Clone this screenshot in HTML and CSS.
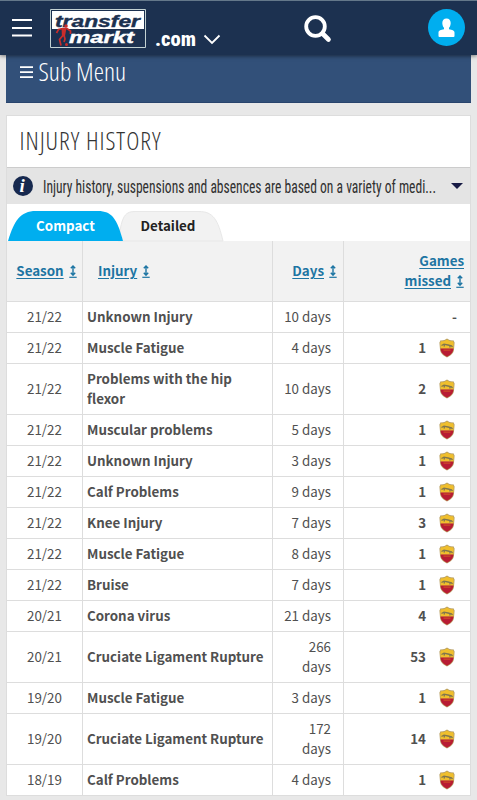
FILE: index.html
```
<!DOCTYPE html>
<html lang="en">
<head>
	<meta charset="UTF-8">
	<title>Injury history</title>
	<link rel="stylesheet" href="styles.css">
</head>
<body>
	<svg class="defs" width="0" height="0">
		<symbol id="crest" viewBox="0 0 16 20">
			<path d="M8 .5C6.200 2 3.500 2.600 1.600 2.300L.4 4.500 1 11.500c.4 4 3.300 6 7 8 3.700-2 6.600-4 7-8l.6-7-1.200-2.200C12.500 2.600 9.800 2 8 .5z" fill="#b9a065"/>
			<path d="M8 1.500C6.200 3 4 3.500 2.100 3.200L1.300 5l.4 5.700h12.600l.4-5.700-.8-1.800C12 3.500 9.800 3 8 1.500z" fill="#f0bf2c"/>
			<path d="M1.600 10.500h12.800C14.400 14.800 11.500 17 8 18.800 4.500 17 1.600 14.800 1.600 10.500z" fill="#b81c33"/>
			<path d="M2.500 7.500l2.500-1.300 4 .8 3.500.8 1 1.200M5.500 7l-.5 1.500M11 8l-.3 1.500" fill="none" stroke="#7f754f" stroke-width="1.300"/>
			<path d="M4.500 11.500h7v1.300h-7z" fill="#cc4a28"/>
		</symbol>
		<symbol id="sort" viewBox="0 0 8 14">
			<path d="M4 .8v9.200M1.800 3.300L4 1 6.200 3.300M1.800 7.800L4 10.200 6.200 7.800" fill="none" stroke="#1d75a3" stroke-width="1.400"/>
			<path d="M.3 12.300h7.400" stroke="#1d75a3" stroke-width="1.200"/>
		</symbol>
	</svg>

	<header class="topbar">
		<svg class="burger" width="20" height="19" viewBox="0 0 20 19">
			<path d="M0 2h20M0 10h20M0 17.500h20" stroke="#fff" stroke-width="2"/>
		</svg>
		<svg class="logo" width="97" height="40" viewBox="0 0 97 40">
			<path d="M.5.500h95v38H.5z" fill="#1c3150" stroke="#c3d2d3"/>
			<path d="M2 2h92v18H2z" fill="#fff"/>
			<text class="logo-text dark" x="5" y="17.500" textLength="85" lengthAdjust="spacingAndGlyphs">transfer</text>
			<text class="logo-text" x="19" y="34" textLength="65" lengthAdjust="spacingAndGlyphs">markt</text>
			<circle cx="16" cy="17" r="1.800" fill="#cb2d2b"/>
			<path d="M6.500 24l2-3.500 4-1h4.500l3.500 2.500v3M12.500 27l-3 3.500 1.500 6M14 26l1 4-1 3" fill="none" stroke="#cb2d2b" stroke-width="1.700"/>
			<path d="M11.500 19h5l-1.500 8-3 1z" fill="#cb2d2b"/>
			<circle cx="16.500" cy="35.500" r="1.500" fill="#cb2d2b"/>
		</svg>
		<svg class="domain" width="44" height="24" viewBox="0 0 44 24">
			<text class="domain-text" x="0" y="18" textLength="41" lengthAdjust="spacingAndGlyphs">.com</text>
		</svg>
		<svg class="chevron" width="18" height="11" viewBox="0 0 18 11">
			<path d="M1.500 1.500L9 9l7.500-7.500" fill="none" stroke="#fff" stroke-width="1.800"/>
		</svg>
		<svg class="search" width="28" height="28" viewBox="0 0 28 28">
			<circle cx="11.500" cy="11.500" r="9.300" fill="none" stroke="#fff" stroke-width="3.800"/>
			<path d="M18.500 18.500l6 6" stroke="#fff" stroke-width="4.600" stroke-linecap="round"/>
		</svg>
		<svg class="user" width="37" height="37" viewBox="0 0 37 37">
			<circle cx="18.500" cy="18.500" r="18.500" fill="#00aeef"/>
			<path d="M18.500 9.500c2.700 0 4.200 1.800 4.200 4.500 0 1.800-.7 3.800-1.700 4.800v1.400c3 .6 5.500 1.300 5.500 3.300v3.500q0 1-1 1h-14q-1 0-1-1v-3.500c0-2 2.500-2.700 5.500-3.300v-1.400c-1-1-1.700-3-1.700-4.800 0-2.700 1.500-4.500 4.200-4.500z" fill="#fff"/>
		</svg>
	</header>

	<nav class="submenu">
		<svg width="120" height="34" viewBox="0 0 120 34">
			<path d="M0 12.200h13M0 17.200h13M0 22.200h13" stroke="#fff" stroke-width="1.700"/>
			<text class="thin light" x="18.500" y="26" textLength="87.500" lengthAdjust="spacingAndGlyphs">Sub Menu</text>
		</svg>
	</nav>

	<main class="box">
		<h1 class="title">
			<svg width="150" height="34" viewBox="0 0 150 34">
				<text class="thin" x="-1.500" y="26" textLength="141" lengthAdjust="spacing">INJURY HISTORY</text>
			</svg>
		</h1>
		<div class="notice">
			<svg width="20" height="20" viewBox="0 0 20 20">
				<circle cx="10" cy="10" r="10" fill="#17294f"/>
				<text class="info" x="6.500" y="16">i</text>
			</svg>
			<svg class="notice-line" width="400" height="26" viewBox="0 0 400 26">
				<text class="notice-text" x="0" y="19.500" textLength="393" lengthAdjust="spacingAndGlyphs">Injury history, suspensions and absences are based on a variety of medi...</text>
			</svg>
			<span class="caret"></span>
		</div>
		<div class="tabs">
			<div class="tab active">
				<svg class="tab-shape" width="115" height="30" viewBox="0 0 115 30"><path d="M0 30C6 10 12 0 28 0h62c14 0 19 8 25 30z" fill="#00aeef"/></svg>
				<span>Compact</span>
			</div>
			<div class="tab">
				<svg class="tab-shape" width="115" height="30" viewBox="0 0 115 30"><path d="M-5 30C-1 8 0 .5 12 .5h64c14 0 19 8 24 29.500z" fill="#f2f2f2" stroke="#e8e8e8"/></svg>
				<span>Detailed</span>
			</div>
		</div>
		<table class="items">
			<thead>
				<tr>
					<th class="season"><a>Season</a><svg class="sort"><use href="#sort"/></svg></th>
					<th class="injury"><a>Injury</a><svg class="sort"><use href="#sort"/></svg></th>
					<th class="days"><a>Days</a><svg class="sort"><use href="#sort"/></svg></th>
					<th class="games"><a>Games<br>missed</a><svg class="sort"><use href="#sort"/></svg></th>
				</tr>
			</thead>
			<tbody>
				<tr><td>21/22</td><td>Unknown Injury</td><td>10 days</td><td class="none">-</td></tr>
				<tr><td>21/22</td><td>Muscle Fatigue</td><td>4 days</td><td>1<svg class="crest"><use href="#crest"/></svg></td></tr>
				<tr><td>21/22</td><td>Problems with the hip flexor</td><td>10 days</td><td>2<svg class="crest"><use href="#crest"/></svg></td></tr>
				<tr><td>21/22</td><td>Muscular problems</td><td>5 days</td><td>1<svg class="crest"><use href="#crest"/></svg></td></tr>
				<tr><td>21/22</td><td>Unknown Injury</td><td>3 days</td><td>1<svg class="crest"><use href="#crest"/></svg></td></tr>
				<tr><td>21/22</td><td>Calf Problems</td><td>9 days</td><td>1<svg class="crest"><use href="#crest"/></svg></td></tr>
				<tr><td>21/22</td><td>Knee Injury</td><td>7 days</td><td>3<svg class="crest"><use href="#crest"/></svg></td></tr>
				<tr><td>21/22</td><td>Muscle Fatigue</td><td>8 days</td><td>1<svg class="crest"><use href="#crest"/></svg></td></tr>
				<tr><td>21/22</td><td>Bruise</td><td>7 days</td><td>1<svg class="crest"><use href="#crest"/></svg></td></tr>
				<tr><td>20/21</td><td>Corona virus</td><td>21 days</td><td>4<svg class="crest"><use href="#crest"/></svg></td></tr>
				<tr><td>20/21</td><td>Cruciate Ligament Rupture</td><td>266<br>days</td><td>53<svg class="crest"><use href="#crest"/></svg></td></tr>
				<tr><td>19/20</td><td>Muscle Fatigue</td><td>3 days</td><td>1<svg class="crest"><use href="#crest"/></svg></td></tr>
				<tr><td>19/20</td><td>Cruciate Ligament Rupture</td><td>172<br>days</td><td>14<svg class="crest"><use href="#crest"/></svg></td></tr>
				<tr><td>18/19</td><td>Calf Problems</td><td>4 days</td><td>1<svg class="crest"><use href="#crest"/></svg></td></tr>
			</tbody>
		</table>
	</main>
</body>
</html>
```
FILE: styles.css
```
* {
	box-sizing: border-box;
}
body {
	margin: 0;
	height: 800px;
	overflow: hidden;
	background: #e8e8e8;
	color: #505050;
	font: 13.35px/20px "Noto Sans CJK SC", sans-serif;
}
svg {
	display: block;
	flex: none;
}
.defs {
	position: absolute;
}

/* top bar */
.topbar {
	position: relative;
	display: flex;
	align-items: flex-start;
	height: 55px;
	padding-left: 12px;
	background: #1c3150;
	border-top: 1px solid #64788a;
	box-shadow: 0 1px 4px rgba(0,0,0,.5);
}
.burger {
	margin-top: 17px;
}
.logo {
	margin: 8px 0 0 18px;
}
.domain {
	margin: 27px 0 0 8px;
}
.chevron {
	margin: 33px 0 0 4px;
}
.search {
	margin: 14px 0 0 83px;
}
.user {
	margin: 8px 0 0 96px;
}
.logo-text {
	font: italic bold 16.500px "Liberation Sans", sans-serif;
	fill: #fff;
	stroke: #fff;
	stroke-width: .4;
}
.logo-text.dark {
	fill: #1c3150;
	stroke: #1c3150;
}
.domain-text {
	font: 800 21px Roboto, sans-serif;
	font-stretch: 75%;
	fill: #fff;
}

/* sub menu */
.submenu {
	height: 48px;
	margin: 0 6px;
	padding-left: 14px;
	background: #325079;
	border-bottom: 1px solid #28446d;
}
.thin {
	font: 300 25px "Open Sans", sans-serif;
	font-stretch: 75%;
	fill: #333;
}
.thin.light {
	fill: #fff;
}

/* content box */
.box {
	width: 465px;
	height: 681px;
	margin: 12px 0 0 6px;
	background: #fff;
	border: 1px solid #ddd;
}
.title {
	height: 51px;
	margin: 0;
	padding: 8px 0 0 14px;
}
.notice {
	display: flex;
	align-items: center;
	height: 37px;
	padding-left: 6px;
	background: #e4e4e4;
	border-top: 1px solid #ccc;
}
.info {
	font: italic bold 19px "Liberation Serif", serif;
	fill: #fff;
}
.notice-line {
	margin-left: 10px;
	overflow: visible;
}
.notice-text {
	font: 450 18px Roboto, sans-serif;
	font-stretch: 75%;
	fill: #303030;
}
.caret {
	margin-left: 8px;
	border: 6px solid transparent;
	border-top-color: #171b45;
	border-bottom: 0;
}

/* tabs */
.tabs {
	display: flex;
	height: 37px;
	padding: 7px 0 0 1px;
}
.tab {
	position: relative;
	width: 115px;
	height: 30px;
	line-height: 29px;
	font-weight: bold;
	text-align: center;
	color: #222;
}
.tab + .tab {
	width: 104px;
	padding-right: 14px;
}
.tab.active {
	z-index: 1;
	color: #fff;
}
.tab-shape {
	position: absolute;
	left: 0;
	top: 0;
	overflow: visible;
}
.tab span {
	position: relative;
}

/* table */
.items {
	width: 463px;
	table-layout: fixed;
	border-collapse: separate;
	border-spacing: 0;
}
.items th {
	height: 61px;
	padding: 0;
	background: #f2f2f2;
	border-right: 1px solid #ddd;
	border-bottom: 1px solid #ddd;
	color: #1d75a3;
}
.items a {
	text-decoration: underline;
	text-underline-offset: 2px;
}
.season {
	width: 76px;
	padding-left: 4px !important;
}
.injury {
	width: 190px;
	padding-left: 15px !important;
	text-align: left;
}
.days {
	width: 71px;
	padding-right: 6px !important;
	text-align: right;
}
.games {
	padding-right: 6px !important;
	text-align: right;
}
.sort {
	display: inline-block;
	width: 8px;
	height: 14px;
	margin-left: 5px;
	vertical-align: -3px;
}
.items td {
	padding: 5px 4px;
	border-right: 1px solid #ddd;
	border-bottom: 1px solid #ddd;
}
.items th:last-child, .items td:last-child {
	border-right: 0;
}
.items td:nth-child(1) {
	text-align: center;
}
.items td:nth-child(2) {
	font-weight: bold;
}
.items td:nth-child(3) {
	padding-right: 12px;
	text-align: right;
}
.items td:nth-child(4) {
	padding-right: 14px;
	font-weight: bold;
	text-align: right;
}
.items td.none {
	padding-right: 13px;
}
.crest {
	display: inline-block;
	width: 16px;
	height: 20px;
	margin: 0 1px 0 13px;
	vertical-align: top;
}
```
